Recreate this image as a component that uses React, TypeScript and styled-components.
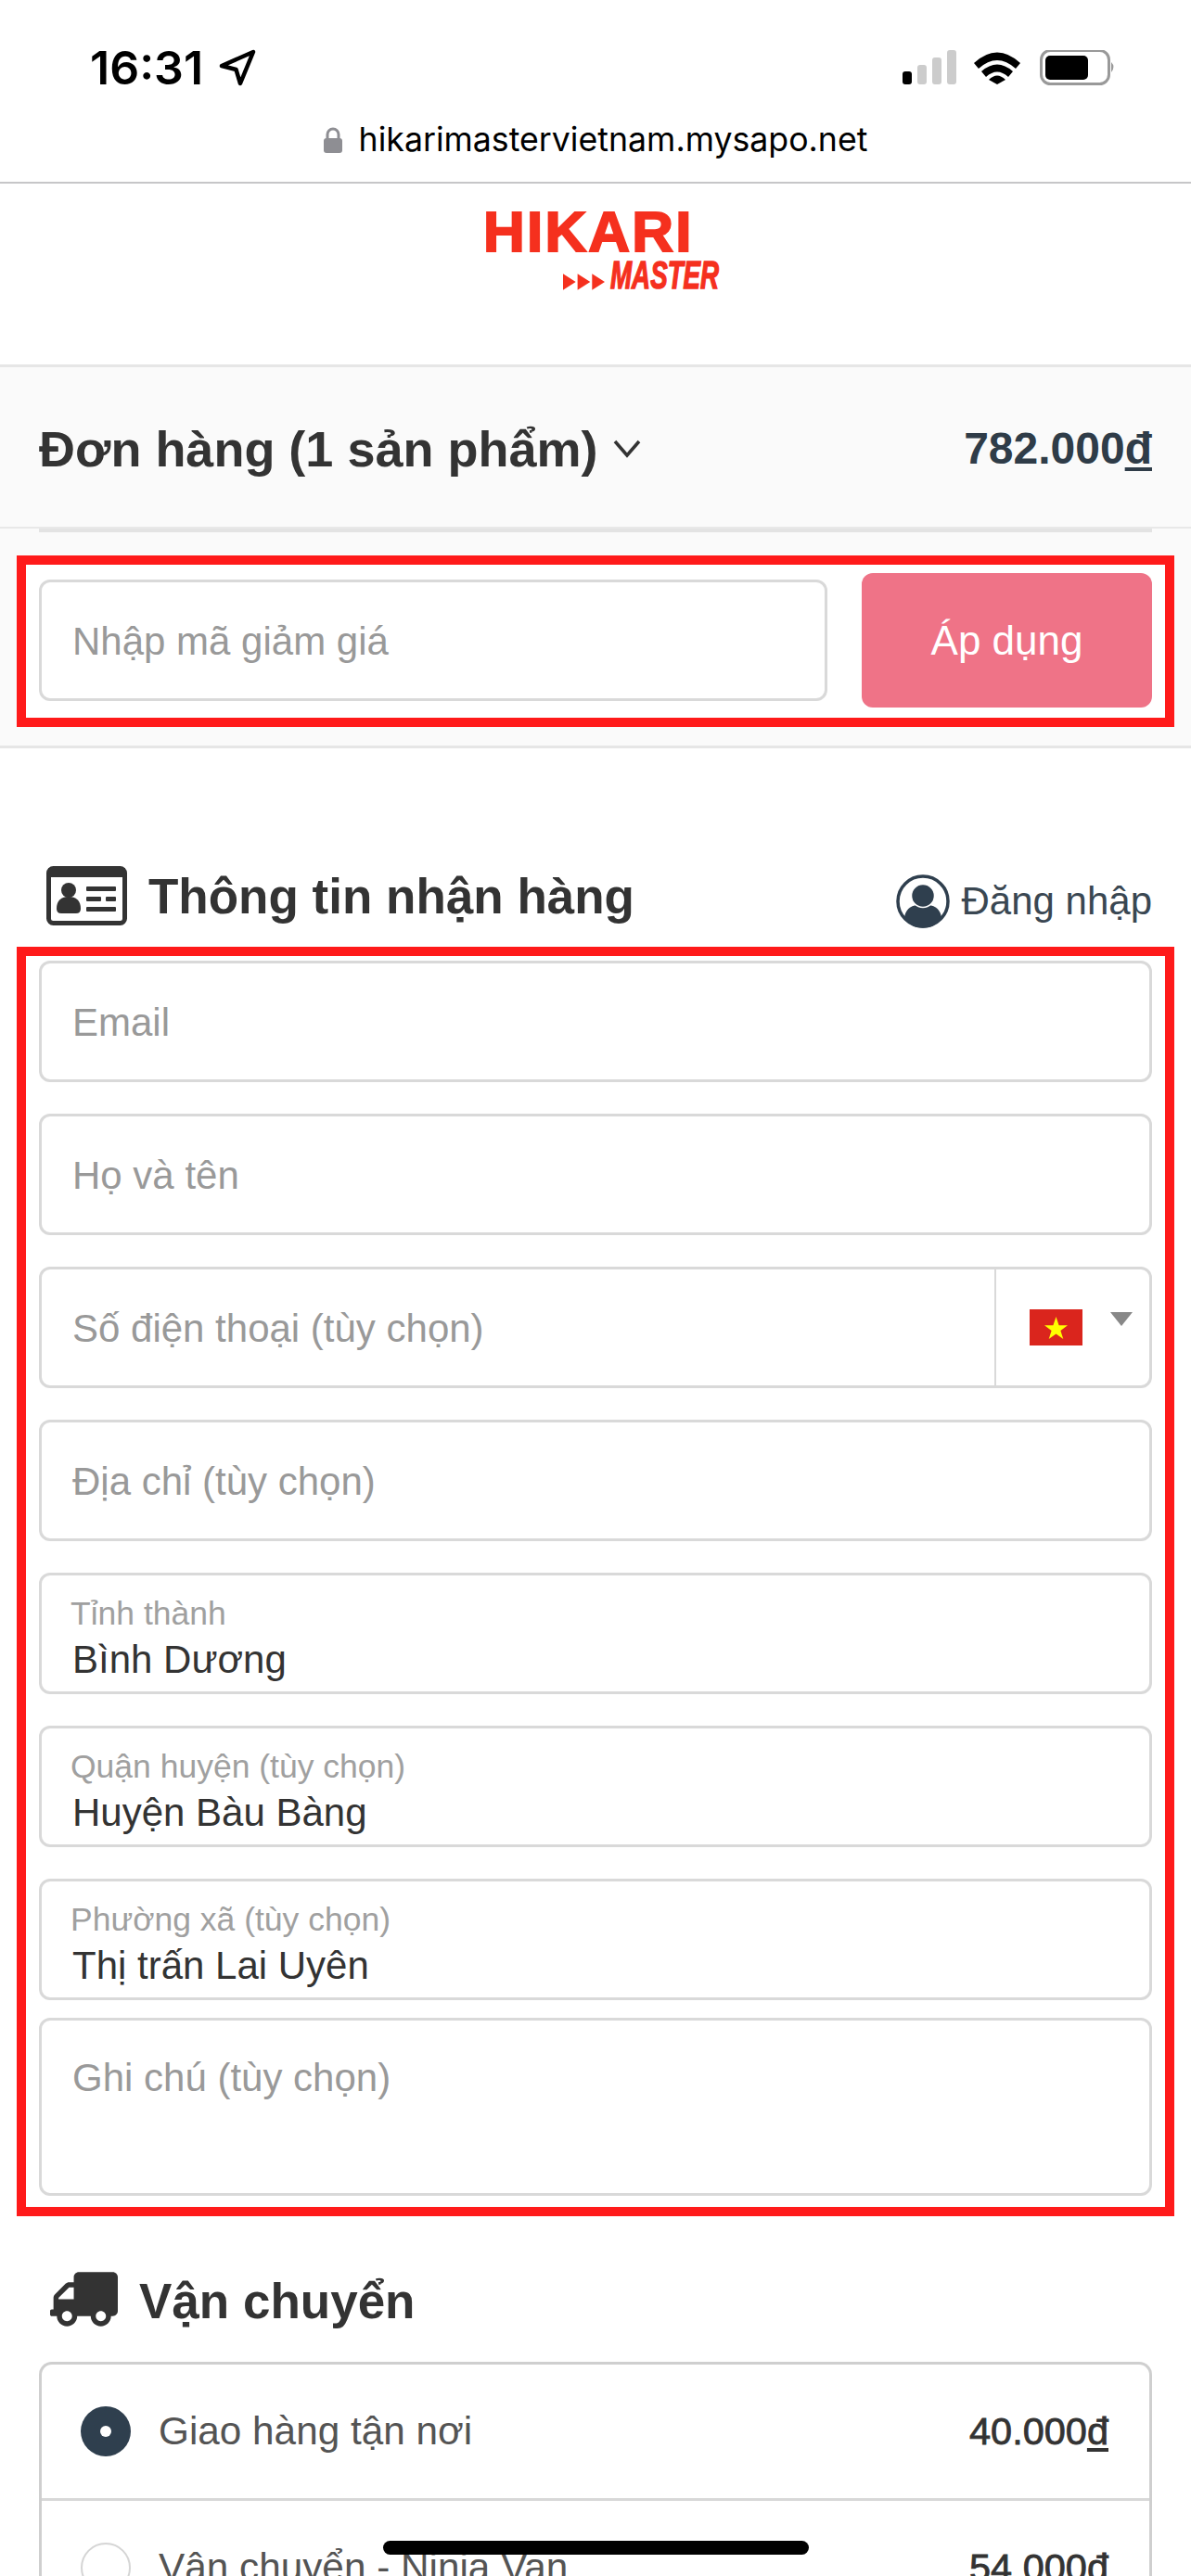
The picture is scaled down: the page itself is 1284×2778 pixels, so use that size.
import React from "react";
import styled, { createGlobalStyle } from "styled-components";
import { FaTruck } from "react-icons/fa";

const Global = createGlobalStyle`
  html, body { margin: 0; padding: 0; background: #fff; }
  * { box-sizing: border-box; }
`;

const Page = styled.div`
  position: relative;
  width: 1284px;
  height: 2778px;
  overflow: hidden;
  background: #fff;
  font-family: "Liberation Sans", Arial, sans-serif;
  color: #333;
`;

const StatusBar = styled.div`
  height: 120px;
  padding: 50px 79px 0 97px;
  display: flex;
  justify-content: space-between;
  align-items: flex-start;
`;
const TimeGroup = styled.div`
  display: flex;
  align-items: center;
  gap: 17px;
  height: 46px;
`;
const Time = styled.span`
  font-family: Inter, sans-serif;
  font-weight: 600;
  font-size: 50px;
  line-height: 46px;
  color: #000;
`;
const StatusIcons = styled.div`
  display: flex;
  align-items: center;
  padding-top: 4px;
`;

const UrlBar = styled.div`
  height: 78px;
  border-bottom: 2px solid #c6c6c8;
  display: flex;
  align-items: flex-start;
  justify-content: center;
  gap: 18px;
  padding-top: 8px;
`;
const UrlText = styled.span`
  font-family: Inter, sans-serif;
  font-size: 35.7px;
  line-height: 44px;
  color: #000;
`;

const LogoHeader = styled.header`
  height: 198px;
  border-bottom: 3px solid #e6e6e6;
  padding: 24px 0 0 521px;
`;
const LogoBlock = styled.div`
  width: 254px;
  color: #f5301e;
  display: flex;
  flex-direction: column;
`;
const LogoTop = styled.div`
  font-weight: 700;
  font-size: 62px;
  line-height: 56px;
  height: 56px;
  letter-spacing: 2.2px;
  -webkit-text-stroke: 2px #f5301e;
`;
const LogoBottom = styled.div`
  display: flex;
  align-items: flex-end;
  justify-content: flex-end;
  gap: 6px;
  height: 36px;
`;
const LogoMaster = styled.div`
  font-weight: 700;
  font-style: italic;
  font-size: 43px;
  line-height: 36px;
  width: 117px;
  white-space: nowrap;
  transform: scaleX(0.645);
  transform-origin: left center;
  -webkit-text-stroke: 1.5px #f5301e;
`;

const SummaryBand = styled.section`
  background: #fafafa;
  height: 411px;
  border-bottom: 3px solid #e6e6e6;
`;
const OrderRow = styled.div`
  height: 174px;
  padding: 3px 42px 0;
  border-bottom: 2px solid #e8e8e8;
  display: flex;
  align-items: center;
  justify-content: space-between;
`;
const OrderTitleGroup = styled.div`
  display: flex;
  align-items: center;
  gap: 16px;
`;
const OrderTitle = styled.span`
  font-weight: 700;
  font-size: 54px;
  color: #333;
`;
const OrderPrice = styled.span`
  font-weight: 700;
  font-size: 48px;
  color: #2f3c48;
`;
const Dong = styled.span`
  text-decoration: underline;
  text-decoration-thickness: 4px;
  text-underline-offset: 4px;
`;
const OrderDivider = styled.div`
  height: 4px;
  margin: 0 42px;
  background: #e3e3e3;
`;

const RedBox = styled.div`
  margin: 0 18px;
  border: 10px solid #ff1a1a;
  background: #fff;
`;
const DiscountBox = styled(RedBox)`
  margin-top: 25px;
  height: 185px;
  padding: 0 14px 2px;
  display: flex;
  align-items: center;
  justify-content: space-between;
`;

const Field = styled.div<{ $height?: number; $width?: string }>`
  position: relative;
  width: ${(p) => p.$width ?? "100%"};
  height: ${(p) => p.$height ?? 131}px;
  border: 3px solid #d9d9d9;
  border-radius: 12px;
  background: #fff;
  padding-left: 33px;
  display: flex;
  flex-direction: column;
  justify-content: center;
  font-size: 42px;
  flex: none;
`;
const Placeholder = styled.span`
  color: #999;
  margin-top: 2px;
`;
const FloatingLabel = styled.span`
  font-size: 35.5px;
  line-height: 40px;
  color: #a0a0a0;
  margin: 11px 0 5px -2px;
`;
const Value = styled.span`
  font-size: 42px;
  line-height: 50px;
  color: #333;
`;
const TopPlaceholder = styled(Placeholder)`
  position: absolute;
  top: 36px;
  left: 33px;
`;

const ApplyButton = styled.div`
  width: 313px;
  height: 145px;
  border-radius: 12px;
  background: #ef7387;
  color: #fff;
  font-size: 44px;
  display: flex;
  align-items: center;
  justify-content: center;
`;

const SectionHead = styled.div<{ $top: number; $bottom: number; $height: number }>`
  margin: ${(p) => p.$top}px 42px ${(p) => p.$bottom}px;
  height: ${(p) => p.$height}px;
  display: flex;
  align-items: center;
  justify-content: space-between;
`;
const HeadLeft = styled.div<{ $gap: number; $indent: number }>`
  display: flex;
  align-items: center;
  gap: ${(p) => p.$gap}px;
  margin-left: ${(p) => p.$indent}px;
`;
const SectionTitle = styled.h2<{ $nudge?: number }>`
  margin: ${(p) => p.$nudge ?? 0}px 0 0;
  font-size: 53px;
  font-weight: 700;
  color: #333;
`;
const LoginLink = styled.div`
  display: flex;
  align-items: center;
  gap: 12px;
  font-size: 42px;
  color: #3a4752;
  margin-top: 12px;
`;

const ContactBox = styled(RedBox)`
  height: 1369px;
  padding: 5px 14px 0;
  display: flex;
  flex-direction: column;
  gap: 34px;
`;
const PhoneSelect = styled.div`
  position: absolute;
  top: 0;
  right: 0;
  bottom: 0;
  width: 167px;
  border-left: 2px solid #d9d9d9;
  display: flex;
  align-items: center;
`;
const NoteField = styled(Field)`
  margin-top: -15px;
`;

const ShipList = styled.div`
  margin: 0 42px;
  border: 3px solid #cfcfcf;
  border-bottom: 0;
  border-radius: 14px 14px 0 0;
`;
const ShipRow = styled.div<{ $divider?: boolean }>`
  height: ${(p) => (p.$divider ? 147 : 144)}px;
  padding: 0 44px 0 42px;
  display: flex;
  align-items: center;
  border-top: ${(p) => (p.$divider ? "3px solid #d8d8d8" : "none")};
`;
const Radio = styled.div<{ $checked?: boolean }>`
  width: 54px;
  height: 54px;
  border-radius: 50%;
  flex: none;
  display: flex;
  align-items: center;
  justify-content: center;
  background: ${(p) => (p.$checked ? "#2f3f4e" : "#fff")};
  border: ${(p) => (p.$checked ? "none" : "2px solid #d5d5d5")};
  &::after {
    content: "";
    display: ${(p) => (p.$checked ? "block" : "none")};
    width: 12px;
    height: 12px;
    border-radius: 50%;
    background: #fff;
  }
`;
const ShipName = styled.span`
  margin-left: 30px;
  font-size: 42.3px;
  color: #545454;
  flex: 1;
`;
const ShipPrice = styled.span`
  font-size: 41.5px;
  font-weight: 400;
  color: #333;
  -webkit-text-stroke: 0.8px #333;
`;

const HomeIndicator = styled.div`
  position: absolute;
  left: 413px;
  top: 2740px;
  width: 459px;
  height: 15px;
  border-radius: 8px;
  background: #000;
`;

const TruckIcon = styled(FaTruck)`
  width: 73px;
  height: 59px;
  color: #333;
  transform: scaleX(-1);
`;

const LocationIcon = () => (
  <svg width="40" height="40" viewBox="0 0 40 40">
    <path d="M3 18 L37 3 L23 37 L18.5 22 Z" fill="none" stroke="#000" strokeWidth="4.5" strokeLinejoin="round" />
  </svg>
);

const StatusGlyphs = () => (
  <svg width="232" height="40" viewBox="0 0 232 40">
    <rect x="0" y="23" width="10" height="14" rx="3" fill="#000" />
    <rect x="16" y="16" width="10" height="21" rx="3" fill="#ccc" />
    <rect x="32" y="8" width="10" height="29" rx="3" fill="#ccc" />
    <rect x="48" y="0" width="10" height="37" rx="3" fill="#ccc" />
    <path d="M77 14 Q102 -9 127 14 L122 20 Q102 2 82 20 Z" fill="#000" />
    <path d="M85 23 Q102 8 119 23 L114 29 Q102 18 90 29 Z" fill="#000" />
    <path d="M93 32 Q102 23 111 32 L102 37 Z" fill="#000" />
    <rect x="149.5" y="0.5" width="73" height="36" rx="10" fill="none" stroke="#999" strokeWidth="3" />
    <rect x="154" y="6" width="46" height="26" rx="5" fill="#000" />
    <path d="M225 13 Q230 18 225 24 Z" fill="#999" />
  </svg>
);

const LockIcon = () => (
  <svg width="20" height="28" viewBox="0 0 20 28" style={{ marginTop: 9 }}>
    <path d="M4 13 V8 a6 6 0 0 1 12 0 V13" fill="none" stroke="#8e8e93" strokeWidth="3" />
    <rect x="0" y="12" width="20" height="16" rx="3" fill="#8e8e93" />
  </svg>
);

const LogoArrows = () => (
  <svg width="45" height="18" viewBox="0 0 46 18" style={{ marginBottom: 1 }}>
    <path d="M0 0 L14 9 L0 18 Z M16 0 L30 9 L16 18 Z M32 0 L46 9 L32 18 Z" fill="#f5301e" />
  </svg>
);

const Chevron = () => (
  <svg width="32" height="22" viewBox="0 0 32 22">
    <path d="M3 3 L16 18 L29 3" fill="none" stroke="#333" strokeWidth="3.5" />
  </svg>
);

const IdCardIcon = () => (
  <svg width="87" height="64" viewBox="0 0 87 64">
    <rect x="2.5" y="2.5" width="82" height="59" rx="5" fill="none" stroke="#333" strokeWidth="5" />
    <rect x="2" y="2" width="83" height="10" fill="#333" />
    <circle cx="24" cy="26" r="8" fill="#333" />
    <path d="M11 46 c0 -9 5 -13 13 -13 s13 4 13 13 q0 5 -5 5 h-16 q-5 0 -5 -5 Z" fill="#333" />
    <rect x="43" y="22" width="32" height="5" rx="1" fill="#333" />
    <rect x="43" y="33" width="16" height="5" rx="1" fill="#333" />
    <rect x="64" y="33" width="11" height="5" rx="1" fill="#333" />
    <rect x="43" y="44" width="32" height="5" rx="1" fill="#333" />
  </svg>
);

const UserCircleIcon = () => (
  <svg width="58" height="58" viewBox="0 0 58 58">
    <circle cx="29" cy="29" r="27" fill="#fff" stroke="#2f3f4e" strokeWidth="3.5" />
    <path d="M9 47 c1 -9 6 -13 14 -14 h12 c8 1 13 5 14 14 a24 24 0 0 1 -40 0 Z" fill="#2f3f4e" />
    <circle cx="29" cy="23" r="12.5" fill="#2f3f4e" stroke="#fff" strokeWidth="1.5" />
  </svg>
);

const FlagIcon = () => (
  <svg width="57" height="39" viewBox="0 0 57 39" style={{ marginLeft: 36 }}>
    <rect width="57" height="39" fill="#da251d" />
    <path d="M28.5 8 L31.6 17.3 L41 17.3 L33.4 23 L36.3 32 L28.5 26.5 L20.7 32 L23.6 23 L16 17.3 L25.4 17.3 Z" fill="#ffff00" />
  </svg>
);

const CaretIcon = () => (
  <svg width="24" height="15" viewBox="0 0 24 15" style={{ marginLeft: 30, marginTop: -18 }}>
    <path d="M0 0 H24 L12 15 Z" fill="#888" />
  </svg>
);

export default function App() {
  return (
    <Page>
      <Global />
      <StatusBar>
        <TimeGroup>
          <Time>16:31</Time>
          <LocationIcon />
        </TimeGroup>
        <StatusIcons>
          <StatusGlyphs />
        </StatusIcons>
      </StatusBar>
      <UrlBar>
        <LockIcon />
        <UrlText>hikarimastervietnam.mysapo.net</UrlText>
      </UrlBar>
      <LogoHeader>
        <LogoBlock>
          <LogoTop>HIKARI</LogoTop>
          <LogoBottom>
            <LogoArrows />
            <LogoMaster>MASTER</LogoMaster>
          </LogoBottom>
        </LogoBlock>
      </LogoHeader>
      <SummaryBand>
        <OrderRow>
          <OrderTitleGroup>
            <OrderTitle>Đơn hàng (1 sản phẩm)</OrderTitle>
            <Chevron />
          </OrderTitleGroup>
          <OrderPrice>782.000<Dong>đ</Dong></OrderPrice>
        </OrderRow>
        <OrderDivider />
        <DiscountBox>
          <Field $width="850px">
            <Placeholder>Nhập mã giảm giá</Placeholder>
          </Field>
          <ApplyButton>Áp dụng</ApplyButton>
        </DiscountBox>
      </SummaryBand>
      <SectionHead $top={127} $bottom={23} $height={64}>
        <HeadLeft $gap={23} $indent={8}>
          <IdCardIcon />
          <SectionTitle>Thông tin nhận hàng</SectionTitle>
        </HeadLeft>
        <LoginLink>
          <UserCircleIcon />
          Đăng nhập
        </LoginLink>
      </SectionHead>
      <ContactBox>
        <Field><Placeholder>Email</Placeholder></Field>
        <Field><Placeholder>Họ và tên</Placeholder></Field>
        <Field>
          <Placeholder>Số điện thoại (tùy chọn)</Placeholder>
          <PhoneSelect>
            <FlagIcon />
            <CaretIcon />
          </PhoneSelect>
        </Field>
        <Field><Placeholder>Địa chỉ (tùy chọn)</Placeholder></Field>
        <Field>
          <FloatingLabel>Tỉnh thành</FloatingLabel>
          <Value>Bình Dương</Value>
        </Field>
        <Field>
          <FloatingLabel>Quận huyện (tùy chọn)</FloatingLabel>
          <Value>Huyện Bàu Bàng</Value>
        </Field>
        <Field>
          <FloatingLabel>Phường xã (tùy chọn)</FloatingLabel>
          <Value>Thị trấn Lai Uyên</Value>
        </Field>
        <NoteField $height={192}>
          <TopPlaceholder>Ghi chú (tùy chọn)</TopPlaceholder>
        </NoteField>
      </ContactBox>
      <SectionHead $top={60} $bottom={38} $height={59}>
        <HeadLeft $gap={23} $indent={12}>
          <TruckIcon />
          <SectionTitle $nudge={4}>Vận chuyển</SectionTitle>
        </HeadLeft>
      </SectionHead>
      <ShipList>
        <ShipRow>
          <Radio $checked />
          <ShipName>Giao hàng tận nơi</ShipName>
          <ShipPrice>40.000<Dong>đ</Dong></ShipPrice>
        </ShipRow>
        <ShipRow $divider>
          <Radio />
          <ShipName>Vận chuyển - Ninja Van</ShipName>
          <ShipPrice>54.000<Dong>đ</Dong></ShipPrice>
        </ShipRow>
      </ShipList>
      <HomeIndicator />
    </Page>
  );
}
